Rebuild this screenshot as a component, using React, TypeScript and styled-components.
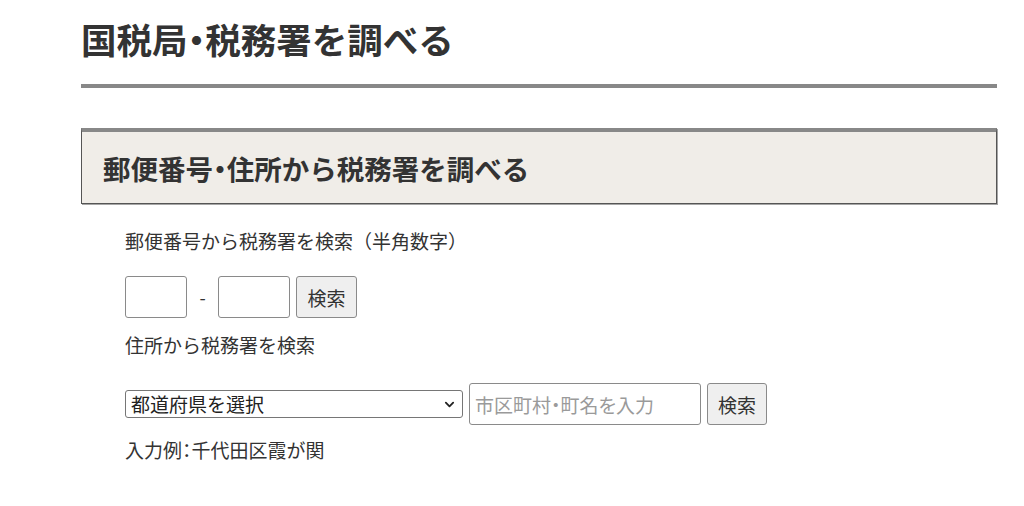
import React from 'react';
import styled, { createGlobalStyle } from 'styled-components';

const GlobalStyle = createGlobalStyle`
  html, body {
    margin: 0;
    padding: 0;
    background: #ffffff;
  }
  body {
    font-family: "Noto Sans CJK JP", "Noto Sans", sans-serif;
    color: #333333;
  }
`;

const Page = styled.div`
  width: 916px;
  padding: 14px 0 40px 81px;
`;

const PageTitle = styled.h1`
  margin: 0;
  font-size: 35.5px;
  line-height: 49px;
  font-weight: 700;
  color: #333333;
  padding-bottom: 21px;
  border-bottom: 4px solid #888888;
`;

// proportional width for the middle dot and colon
const Punct = styled.span`
  font-feature-settings: "palt";
`;

const Section = styled.section`
  margin-top: 40px;
`;

const SectionHeader = styled.h2`
  margin: 0;
  height: 71px;
  display: flex;
  align-items: center;
  padding: 0 21px;
  font-size: 27.5px;
  font-weight: 700;
  color: #333333;
  background: #f0ede8;
  border: 1px solid #555555;
  border-top: 4px solid #888888;
  box-shadow: 1px 1px 0 rgba(0, 0, 0, 0.35);
`;

const SectionBody = styled.div`
  padding: 23px 0 0 44px;
`;

const Label = styled.p<{ $gap?: number }>`
  margin: ${({ $gap }) => $gap ?? 0}px 0 0;
  font-size: 19px;
  line-height: 27px;
  color: #333333;
`;

const Row = styled.div<{ $gap: number }>`
  display: flex;
  align-items: center;
  margin-top: ${({ $gap }) => $gap}px;
`;

const TextInput = styled.input<{ $width: number }>`
  box-sizing: border-box;
  width: ${({ $width }) => $width}px;
  height: 42px;
  padding: 0 5px;
  border: 1px solid #8a8a8a;
  border-radius: 3px;
  background: #ffffff;
  font-family: inherit;
  font-size: 19px;
  color: #333333;
  outline: none;

  &::placeholder {
    color: #9a9a9a;
    font-feature-settings: "palt";
  }
`;

const Dash = styled.span`
  width: 31px;
  text-align: center;
  font-size: 18px;
  color: #333333;
`;

const Button = styled.button<{ $width: number }>`
  box-sizing: border-box;
  width: ${({ $width }) => $width}px;
  height: 42px;
  margin-left: 6px;
  padding: 0;
  border: 1px solid #8a8a8a;
  border-radius: 3px;
  background: #efefef;
  font-family: inherit;
  font-size: 19px;
  color: #333333;
`;

const SelectWrap = styled.div`
  position: relative;
  width: 338px;
  height: 28px;
  margin-right: 6px;
`;

const Select = styled.select`
  box-sizing: border-box;
  width: 100%;
  height: 100%;
  appearance: none;
  padding: 0 28px 0 5px;
  border: 1px solid #767676;
  border-radius: 3px;
  background: #ffffff;
  font-family: inherit;
  font-size: 19px;
  line-height: 26px;
  color: #222222;
  outline: none;
`;

const Chevron = styled.svg`
  position: absolute;
  right: 8px;
  top: 9px;
  width: 11px;
  height: 11px;
  pointer-events: none;
`;

export default function App() {
  return (
    <>
      <GlobalStyle />
      <Page>
        <PageTitle>
          国税局<Punct>・</Punct>税務署を調べる
        </PageTitle>
        <Section>
          <SectionHeader>
            郵便番号<Punct>・</Punct>住所から税務署を調べる
          </SectionHeader>
          <SectionBody>
            <Label>郵便番号から税務署を検索（半角数字）</Label>
            <Row $gap={22}>
              <TextInput $width={62} />
              <Dash>-</Dash>
              <TextInput $width={72} />
              <Button $width={61}>検索</Button>
            </Row>
            <Label $gap={13}>住所から税務署を検索</Label>
            <Row $gap={25}>
              <SelectWrap>
                <Select defaultValue="">
                  <option value="">都道府県を選択</option>
                </Select>
                <Chevron viewBox="0 0 12 12">
                  <path d="M2 4l4 4 4-4" fill="none" stroke="#222" strokeWidth="2" strokeLinecap="round" strokeLinejoin="round" />
                </Chevron>
              </SelectWrap>
              <TextInput $width={232} placeholder="市区町村・町名を入力" />
              <Button $width={60}>検索</Button>
            </Row>
            <Label $gap={11}>
              入力例<Punct>：</Punct>千代田区霞が関
            </Label>
          </SectionBody>
        </Section>
      </Page>
    </>
  );
}
